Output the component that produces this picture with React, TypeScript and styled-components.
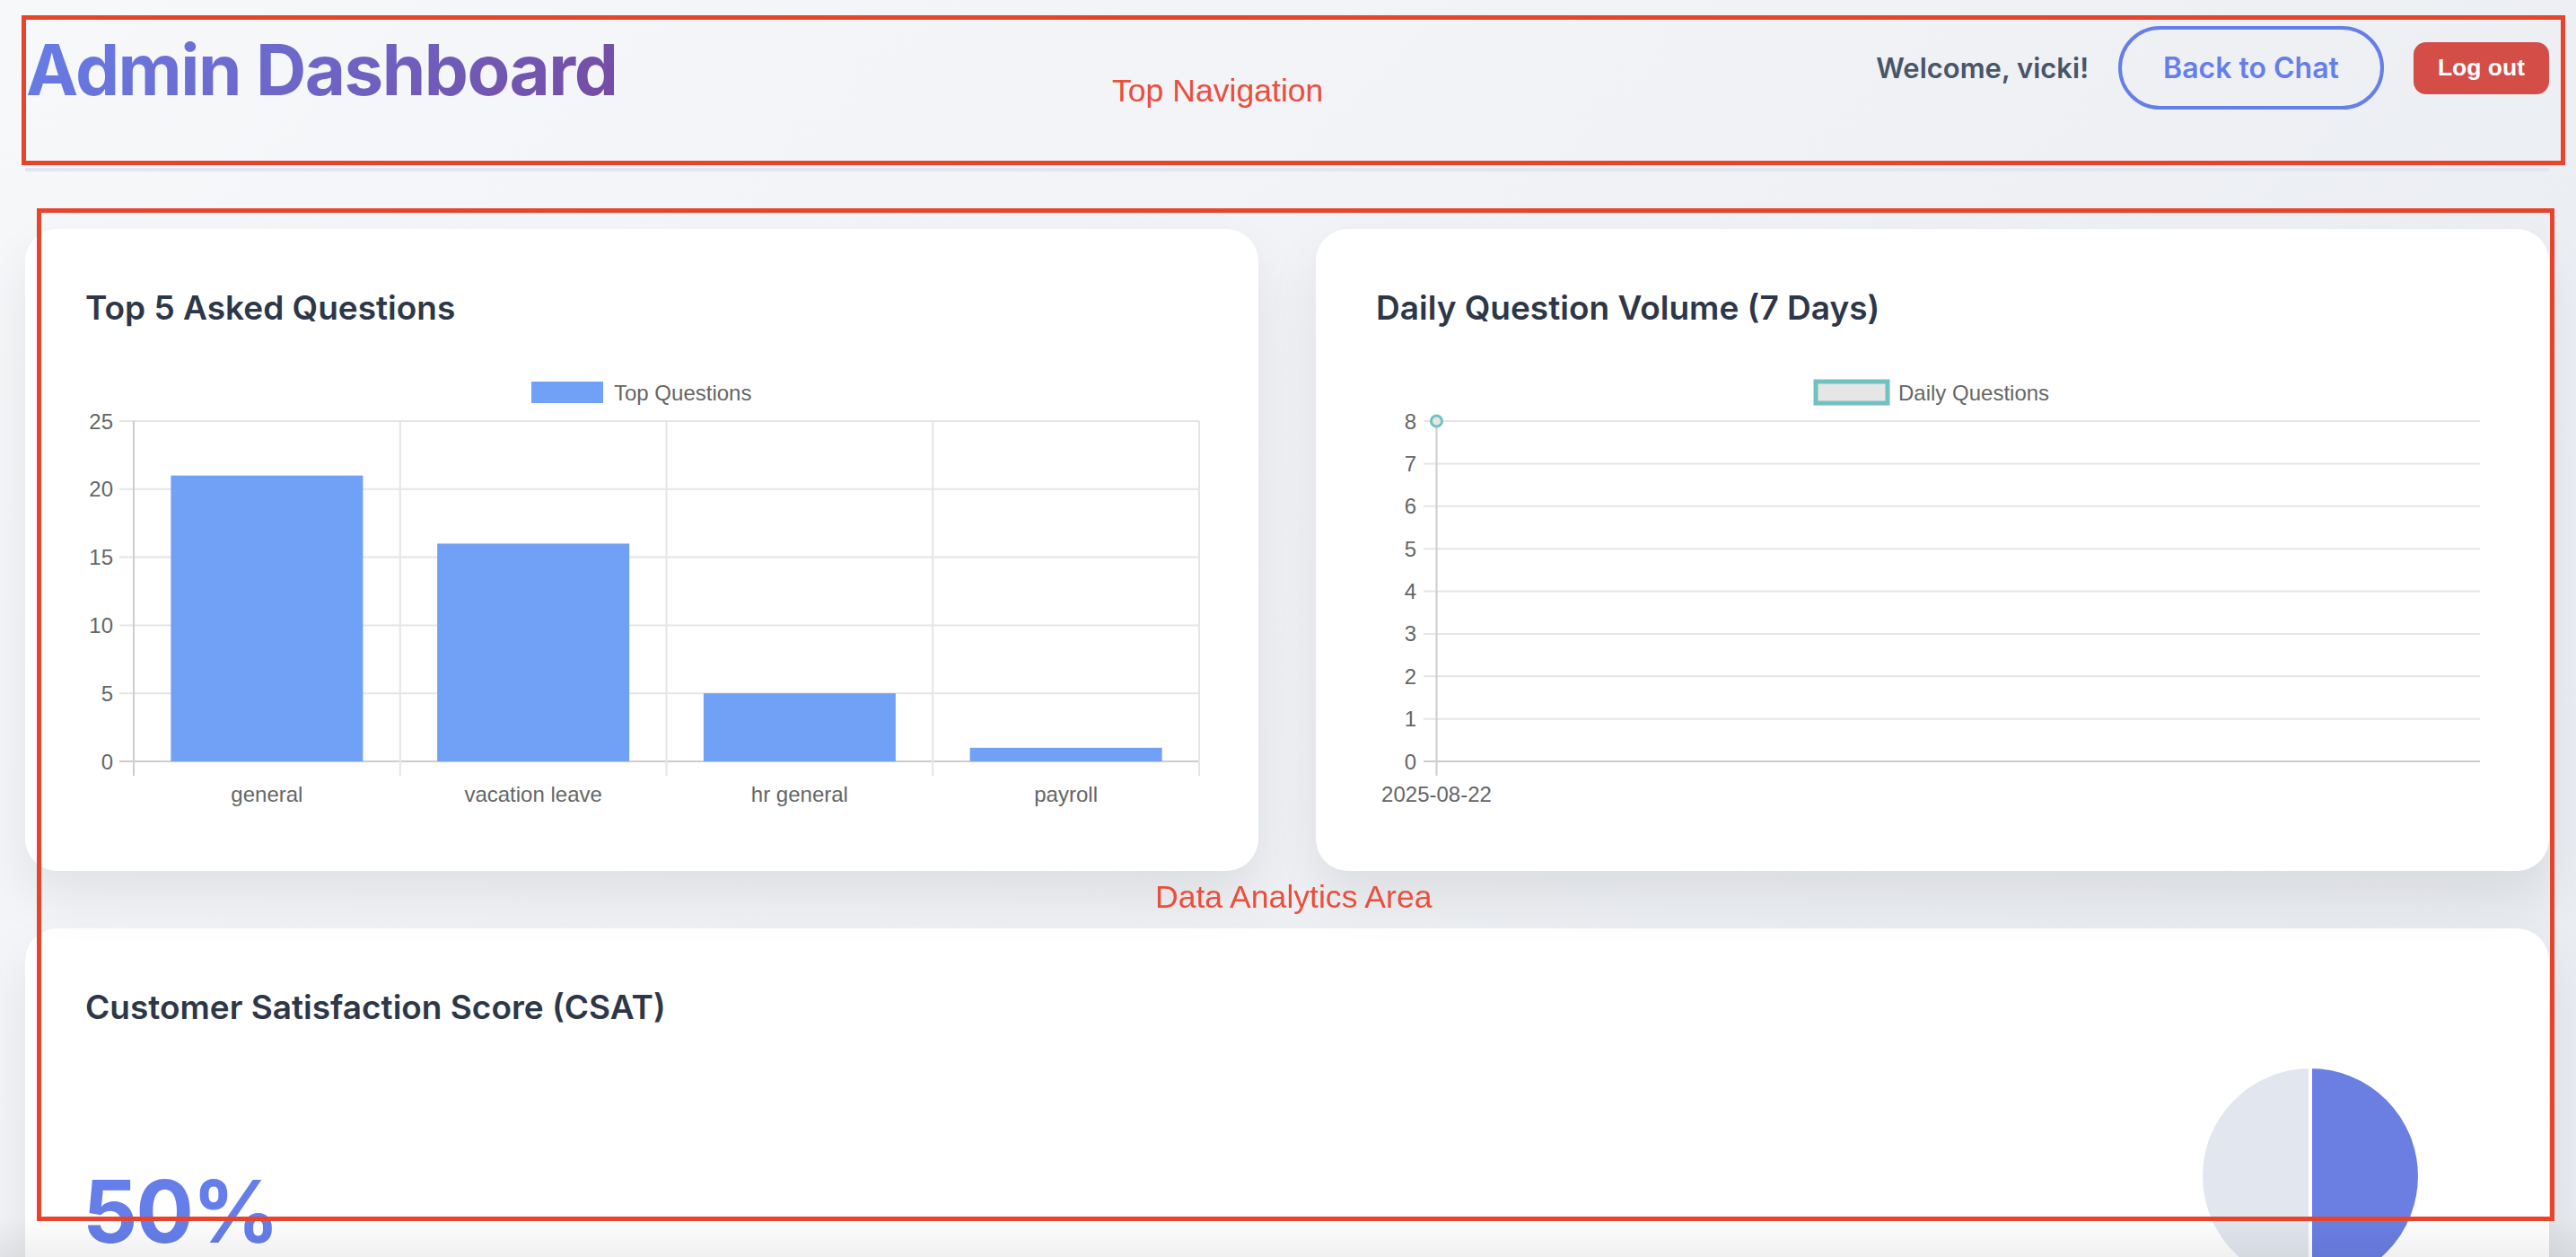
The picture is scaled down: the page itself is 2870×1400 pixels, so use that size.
import React from "react";
import styled, { createGlobalStyle } from "styled-components";

const GlobalStyle = createGlobalStyle`
  html, body { margin: 0; padding: 0; }
  body {
    height: 1400px;
    overflow: hidden;
    background: linear-gradient(135deg, #f7f8fa 0%, #e8ebf0 100%);
    font-family: Inter, "Noto Sans", sans-serif;
  }
`;

const Page = styled.div`
  position: relative;
  height: 1400px;
  overflow: hidden;
  padding: 0 30px 0 28px;
  box-sizing: border-box;
`;

const Header = styled.header`
  display: flex;
  justify-content: space-between;
  align-items: center;
  padding: 29px 0 65px 1px;
  border-bottom: 4px solid #e2e6f4;
`;

const Title = styled.h1`
  margin: 4px 0 0;
  font-size: 78px;
  line-height: 1;
  font-weight: 700;
  letter-spacing: -1.5px;
  background: linear-gradient(135deg, #667eea 0%, #764ba2 100%);
  -webkit-background-clip: text;
  background-clip: text;
  color: transparent;
`;

const UserArea = styled.div`
  display: flex;
  align-items: center;
  gap: 33px;
`;

const Welcome = styled.span`
  font-size: 31px;
  font-weight: 600;
  color: #4a5568;
`;

const BackButton = styled.button`
  display: inline-flex;
  align-items: center;
  justify-content: center;
  height: 93px;
  padding: 0 46px;
  border: 4px solid #667eea;
  border-radius: 999px;
  background: transparent;
  color: #667eea;
  font-family: Inter, "Noto Sans", sans-serif;
  font-size: 32px;
  font-weight: 600;
  box-sizing: border-box;
`;

const LogoutButton = styled.button`
  display: inline-flex;
  align-items: center;
  justify-content: center;
  height: 58px;
  padding: 0 27px;
  border: none;
  border-radius: 14px;
  background: #d44d47;
  color: #ffffff;
  font-family: "Liberation Sans", Arial, sans-serif;
  font-size: 26.5px;
  font-weight: 700;
`;

const Main = styled.main`
  padding-top: 64px;
`;

const ChartGrid = styled.div`
  display: grid;
  grid-template-columns: 1fr 1fr;
  gap: 64px;
`;

const Card = styled.section<{ $tall?: boolean }>`
  min-width: 0;
  box-sizing: border-box;
  padding: 65px 64px;
  border-radius: 36px;
  background: rgba(255, 255, 255, 0.97);
  box-shadow: 0 30px 60px rgba(0, 0, 0, 0.08);
  height: ${(p) => (p.$tall ? "520px" : "auto")};
`;

const CsatCard = styled(Card)`
  margin-top: 64px;
`;

const CardTitle = styled.h3`
  margin: 0 0 38px 3px;
  font-size: 37px;
  line-height: 1.265;
  font-weight: 600;
  color: #2d3748;
`;

const ChartSvg = styled.svg`
  display: block;
  width: 100%;
  height: 500px;
`;

const AxisText = styled.text`
  font-family: "Liberation Sans", Arial, sans-serif;
  font-size: 24px;
  fill: #666666;
`;

const CsatRow = styled.div`
  display: flex;
  justify-content: space-between;
  align-items: flex-start;
`;

const Score = styled.div`
  padding-top: 108px;
  font-size: 96px;
  line-height: 1.2;
  font-weight: 700;
  letter-spacing: -2px;
  color: #667eea;
`;

const PieBox = styled.div`
  width: 404px;
  display: flex;
  justify-content: center;
  padding-top: 1px;
`;

const BottomShade = styled.div`
  position: fixed;
  left: 0;
  right: 0;
  bottom: 0;
  height: 45px;
  pointer-events: none;
  background: linear-gradient(to bottom, rgba(0, 0, 0, 0), rgba(0, 0, 0, 0.06));
`;

const AnnotationBox = styled.div<{ $l: number; $t: number; $w: number; $h: number }>`
  position: absolute;
  left: ${(p) => p.$l}px;
  top: ${(p) => p.$t}px;
  width: ${(p) => p.$w}px;
  height: ${(p) => p.$h}px;
  box-sizing: border-box;
  border: 5px solid #e8432b;
  pointer-events: none;
`;

const AnnotationLabel = styled.div<{ $l: number; $t: number }>`
  position: absolute;
  left: ${(p) => p.$l}px;
  top: ${(p) => p.$t}px;
  font-family: "Liberation Sans", Arial, sans-serif;
  font-size: 35.6px;
  line-height: 35px;
  color: #ea4e3c;
  white-space: nowrap;
  pointer-events: none;
`;

const GRID = "#e5e5e5";
const AXIS = "#cdcdcd";
const BAR = "#71a1f7";
const TEAL = "#72c0c0";

const bars = [
  { label: "general", value: 21 },
  { label: "vacation leave", value: 16 },
  { label: "hr general", value: 5 },
  { label: "payroll", value: 1 },
];

function BarChart() {
  const left = 57;
  const right = 1244;
  const top = 64;
  const bottom = 443;
  const catW = (right - left) / bars.length;
  const unit = (bottom - top) / 25;
  const ticks = [25, 20, 15, 10, 5, 0];
  return (
    <ChartSvg viewBox="0 0 1246 500">
      <rect x={500} y={20} width={80} height={24} fill={BAR} />
      <AxisText x={592} y={32} dominantBaseline="central">Top Questions</AxisText>
      {ticks.map((t, i) => {
        const y = top + i * ((bottom - top) / 5);
        return (
          <g key={t}>
            <line x1={41} x2={right} y1={y} y2={y} stroke={t === 0 ? AXIS : GRID} strokeWidth={2} />
            <AxisText x={34} y={y} textAnchor="end" dominantBaseline="central">{t}</AxisText>
          </g>
        );
      })}
      {[0, 1, 2, 3, 4].map((k) => {
        const x = left + k * catW;
        return <line key={k} x1={x} x2={x} y1={top} y2={459} stroke={k === 0 ? AXIS : GRID} strokeWidth={2} />;
      })}
      {bars.map((b, k) => {
        const cx = left + catW * (k + 0.5);
        const h = b.value * unit;
        return (
          <g key={b.label}>
            <rect x={cx - 107} y={bottom - h} width={214} height={h} fill={BAR} />
            <AxisText x={cx} y={487.6} textAnchor="middle">{b.label}</AxisText>
          </g>
        );
      })}
    </ChartSvg>
  );
}

function LineChart() {
  const left = 70.5;
  const right = 1233;
  const top = 64;
  const bottom = 443;
  const step = (bottom - top) / 8;
  const ticks = [8, 7, 6, 5, 4, 3, 2, 1, 0];
  return (
    <ChartSvg viewBox="0 0 1246 500">
      <rect x={493} y={20} width={80} height={24} fill="#e6e6e6" stroke={TEAL} strokeWidth={5} />
      <AxisText x={585} y={32} dominantBaseline="central">Daily Questions</AxisText>
      {ticks.map((t, i) => {
        const y = top + i * step;
        return (
          <g key={t}>
            <line x1={56} x2={right} y1={y} y2={y} stroke={t === 0 ? AXIS : GRID} strokeWidth={2} />
            <AxisText x={48} y={y} textAnchor="end" dominantBaseline="central">{t}</AxisText>
          </g>
        );
      })}
      <line x1={left} x2={left} y1={top} y2={459} stroke={AXIS} strokeWidth={2} />
      <AxisText x={left} y={487.6} textAnchor="middle">2025-08-22</AxisText>
      <circle cx={left} cy={top} r={6} fill="#e6e6e6" stroke={TEAL} strokeWidth={3} />
    </ChartSvg>
  );
}

function CsatPie() {
  const c = 125;
  const r = 122;
  return (
    <svg width={250} height={250} viewBox="0 0 250 250">
      <path d={`M ${c} ${c} L ${c} ${c - r} A ${r} ${r} 0 0 1 ${c} ${c + r} Z`} fill="#6b7fe3" stroke="#ffffff" strokeWidth={4} />
      <path d={`M ${c} ${c} L ${c} ${c + r} A ${r} ${r} 0 0 1 ${c} ${c - r} Z`} fill="#e2e7ef" stroke="#ffffff" strokeWidth={4} />
    </svg>
  );
}

export default function App() {
  return (
    <>
      <GlobalStyle />
      <Page>
        <Header>
          <Title>Admin Dashboard</Title>
          <UserArea>
            <Welcome>Welcome, vicki!</Welcome>
            <BackButton>Back to Chat</BackButton>
            <LogoutButton>Log out</LogoutButton>
          </UserArea>
        </Header>
        <Main>
          <ChartGrid>
            <Card>
              <CardTitle>Top 5 Asked Questions</CardTitle>
              <BarChart />
            </Card>
            <Card>
              <CardTitle>Daily Question Volume (7 Days)</CardTitle>
              <LineChart />
            </Card>
          </ChartGrid>
          <CsatCard $tall>
            <CardTitle>Customer Satisfaction Score (CSAT)</CardTitle>
            <CsatRow>
              <Score>50%</Score>
              <PieBox>
                <CsatPie />
              </PieBox>
            </CsatRow>
          </CsatCard>
        </Main>
        <BottomShade />
        <AnnotationBox $l={24} $t={17} $w={2834} $h={167} />
        <AnnotationLabel $l={1239} $t={84}>Top Navigation</AnnotationLabel>
        <AnnotationBox $l={41} $t={232} $w={2805} $h={1128} />
        <AnnotationLabel $l={1287} $t={982}>Data Analytics Area</AnnotationLabel>
      </Page>
    </>
  );
}
